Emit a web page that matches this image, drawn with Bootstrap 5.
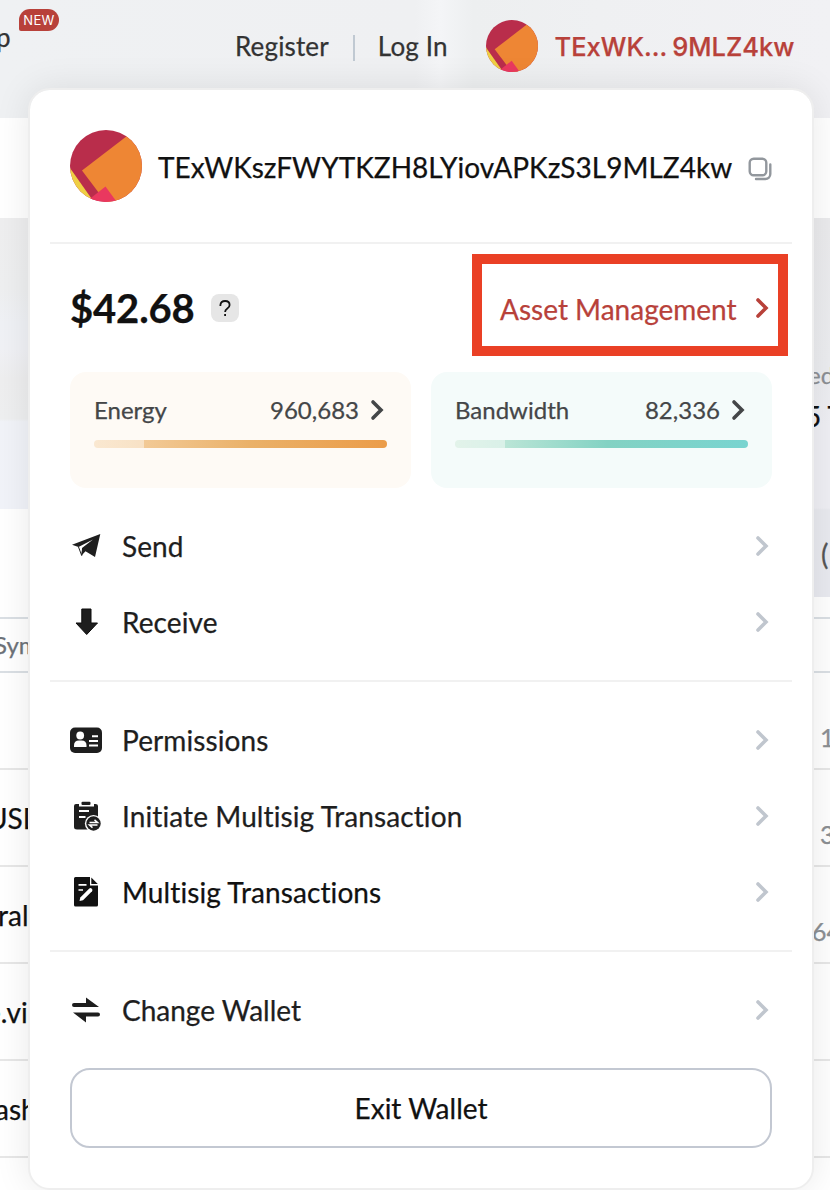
<!DOCTYPE html>
<html lang="en">
<head>
<meta charset="utf-8">
<meta name="viewport" content="width=device-width, initial-scale=1">
<title>Wallet</title>
<link href="https://cdn.jsdelivr.net/npm/bootstrap@5.3.0/dist/css/bootstrap.min.css" rel="stylesheet">
<style>
  body { font-family: Lato, "Liberation Sans", sans-serif; font-size: 28px; line-height: 36px; color: #1e1e1e; background: #fff; width: 830px; height: 1190px; overflow: hidden; font-variant-ligatures: none; -webkit-text-stroke: .25px currentColor; }
  svg { display: block; flex: none; }
  .topbar { height: 118px; background: linear-gradient(90deg, #eff1f3 0, #eff0f2 50%, #f4f5f7 53%, #edeff0 57%, #eff0f2 72%, #f1f1f4 100%); }
  .topbar-inner { height: 92px; padding-left: 235px; font-size: 26px; color: #333; letter-spacing: .15px; }
  .edge-link { left: -4px; top: 19px; font-size: 26px; color: #333; }
  .new-tag { left: 19px; top: 9px; width: 40px; height: 22px; line-height: 22px; font-family: Inter, sans-serif; font-size: 13px; color: #fff; background: #b8413a; border-radius: 11px 11px 11px 2px; letter-spacing: .3px; -webkit-text-stroke: 0; }
  .sep { width: 2px; height: 26px; background: #c0c9d2; margin: 3px 23px 0 24px; }
  .addr-short { font-family: Inter, sans-serif; font-weight: 500; font-size: 25.5px; color: #b8413a; margin: 2px 0 0 17px; white-space: nowrap; letter-spacing: 0; word-spacing: -1.5px; }
  .hero { margin-top: 100px; height: 399px; }
  .hero-left { width: 200px; height: 291px; background: linear-gradient(#eeeeef 0, #eeeff0 24%, #eff1f5 36%, #f0f1f5 45%, #eeeeef 55%, #eeeff0 69%, #f1f3f8 70%, #f1f3f9 100%); }
  .hero-right { width: 200px; height: 379px; background: linear-gradient(#ebebed 0, #ecedf0 40%, #efeff4 55%, #efeff4 76.5%, #e9eaef 77%, #e9eaf0 100%); }
  .hero-right div { white-space: nowrap; }
  .thead-row { height: 56px; border-top: 2px solid #dadfe4; border-bottom: 2px solid #dadfe4; font-size: 24px; color: #6d7278; }
  .coin-row { height: 97px; border-bottom: 2px solid #e7e7e7; color: #111; }
  .cell-l, .cell-r { white-space: nowrap; }
  .cell-l { width: 60px; }
  .cell-r { width: 18px; font-size: 25px; color: #8c9094; }
  .wallet { left: 28px; top: 88px; width: 786px; height: 1102px; background: #fff; background-clip: padding-box; border: 2px solid #eeeeee; border-radius: 22px; box-shadow: 0 0 36px rgba(0,0,0,.09); padding: 0 20px; }
  .owner { height: 154px; padding: 0 20px; border-bottom: 2px solid #f1f1f1; }
  .owner-addr { margin: 2px 0 0 16px; color: #111; white-space: nowrap; letter-spacing: .03px; }
  .balance { height: 128px; padding: 10px 4px 0 20px; }
  .total { font-size: 40px; font-weight: 700; color: #111; line-height: 50px; letter-spacing: -.15px; }
  .help { width: 28px; height: 28px; border-radius: 8px; background: #e6e6e6; margin-left: 16px; }
  .assets { width: 316px; height: 102px; border: 10px solid #ea4025; padding: 8px 0 0 18px; color: #b8413a; }
  .res { width: 341px; height: 116px; border-radius: 16px; padding: 20px 24px; font-size: 24px; color: #444648; }
  .res-energy { background: #fefaf5; }
  .res-band { background: #f4fbfa; }
  .meter { height: 8px; border-radius: 4px; margin-top: 12px; }
  .meter-e { background: linear-gradient(90deg, rgba(255,255,255,.45) 50px, transparent 50px), linear-gradient(90deg, #f6d5ab, #eab169 53%, #eb9c49); }
  .meter-b { background: linear-gradient(90deg, rgba(255,255,255,.45) 50px, transparent 50px), linear-gradient(90deg, #cbe9d8, #bae5d6 17%, #83d2c3 52%, #78d4d0); }
  .item { height: 76px; padding: 0 23px 2px 20px; }
  .item span { margin-left: 20px; letter-spacing: .1px; }
  .line { height: 2px; background: #f1f1f1; margin: 19px 0 21px; }
  .exit { height: 80px; border: 2px solid #c3c8d2; border-radius: 20px; margin: 19px 20px 0; color: #111; }
</style>
</head>
<body class="position-relative">
<svg width="0" height="0" class="position-absolute">
  <defs>
    <clipPath id="round"><circle cx="36" cy="36" r="36"/></clipPath>
    <symbol id="avatar" viewBox="0 0 72 72"><g clip-path="url(#round)"><path fill="#b92d4b" d="M0 0h72v72H0z"/><path fill="#efcf43" d="M0 38 26 75H0z"/><path fill="#ee8634" d="M57 6 12 40.500 38 75H75V0z"/><path fill="#e9385f" d="M35.500 56.500 49 75H12z"/></g></symbol>
    <symbol id="chev" viewBox="0 0 14 22"><path d="M3 3l8 8-8 8" fill="none" stroke="currentColor" stroke-width="3.600" stroke-linecap="round" stroke-linejoin="miter"/></symbol>
  </defs>
</svg>

<header class="topbar">
  <div class="edge-link position-absolute">p</div>
  <div class="new-tag position-absolute text-center">NEW</div>
  <div class="topbar-inner d-flex align-items-center">
    <span>Register</span><i class="sep"></i><span>Log In</span>
    <svg width="52" height="52" style="margin-left:38px"><use href="#avatar"/></svg>
    <span class="addr-short">TExWK... 9MLZ4kw</span>
  </div>
</header>

<main>
  <section class="hero d-flex justify-content-between">
    <div class="hero-left"></div>
    <div class="hero-right d-flex flex-column align-items-end">
      <div class="w-100" style="padding:139px 0 0 178px;font-size:24px;color:#8c9094">ed</div>
      <div class="w-100" style="padding:5px 0 0 175px;color:#111">5 <span style="margin-left:0">T</span></div>
      <div class="w-100" style="padding:102px 0 0 191px;color:#555">(</div>
    </div>
  </section>
  <div class="thead-row d-flex align-items-center justify-content-between"><div class="cell-l" style="margin-left:-6px">Sym</div></div>
  <div class="coin-row d-flex align-items-center justify-content-between"><div class="cell-l"></div><div class="cell-r ps-2" style="padding-top:32px">1</div></div>
  <div class="coin-row d-flex align-items-center justify-content-between"><div class="cell-l" style="margin-left:-13px">USD</div><div class="cell-r ps-2" style="padding-top:32px">3</div></div>
  <div class="coin-row d-flex align-items-center justify-content-between"><div class="cell-l" style="margin-left:-2px">ral</div><div class="cell-r" style="padding-top:32px">64</div></div>
  <div class="coin-row d-flex align-items-center justify-content-between"><div class="cell-l" style="margin-left:-14px">e.vi</div></div>
  <div class="coin-row d-flex align-items-center justify-content-between"><div class="cell-l" style="margin-left:-5px">ash</div></div>
</main>

<aside class="wallet position-absolute">
  <div class="owner d-flex align-items-center">
    <svg width="72" height="72"><use href="#avatar"/></svg>
    <span class="owner-addr">TExWKszFWYTKZH8LYiovAPKzS3L9MLZ4kw</span>
    <svg class="ms-auto" width="24" height="24" style="margin-top:6px" viewBox="0 0 24 24" fill="none" stroke="#92979d" stroke-width="2.400" stroke-linecap="round"><rect x="1.700" y="1.700" width="16.600" height="16.600" rx="4"/><path d="M22.300 7.500V17a5 5 0 0 1-5 5H8"/></svg>
  </div>
  <div class="balance d-flex align-items-start">
    <span class="total" style="margin-top:29px">$42.68</span>
    <svg class="help" style="margin-top:40px" viewBox="0 0 28 28" fill="none" stroke="#111" stroke-width="1.800"><path d="M9.400 12V11q.4-4 4.700-4 4.500 0 4.500 4c0 4-4.500 3-4.500 7M14.100 20v2"/></svg>
    <div class="assets d-flex align-items-center ms-auto"><span>Asset Management</span><svg width="14" height="22" style="margin:-2px 0 0 18px"><use href="#chev"/></svg></div>
  </div>
  <div class="d-flex justify-content-between" style="padding:0 20px">
    <div class="res res-energy">
      <div class="d-flex align-items-center"><span>Energy</span><span class="ms-auto">960,683</span><svg width="14" height="22" style="margin:0 3px 0 11px"><use href="#chev"/></svg></div>
      <div class="meter meter-e"></div>
    </div>
    <div class="res res-band">
      <div class="d-flex align-items-center"><span>Bandwidth</span><span class="ms-auto">82,336</span><svg width="14" height="22" style="margin:0 3px 0 11px"><use href="#chev"/></svg></div>
      <div class="meter meter-b"></div>
    </div>
  </div>
  <nav style="margin-top:21px">
    <div class="item d-flex align-items-center">
      <svg width="32" height="32" viewBox="0 0 32 32" fill="#1e1e1e"><path d="M30.300 4 2 14.700 8.500 17 23 9.500 12 18l-.5 7.500 4-4.200L25 27z"/><path d="M8.500 17l3.200 8.500 1.200-7" fill="none" stroke="#1e1e1e" stroke-width="1"/></svg>
      <span>Send</span><svg class="ms-auto" width="14" height="22" color="#c0c6ce"><use href="#chev"/></svg>
    </div>
    <div class="item d-flex align-items-center">
      <svg width="32" height="32" viewBox="0 0 32 32"><path d="M11.800 3H21v14h6.500L16.700 28.500 6 17h5.800z" fill="#1e1e1e" stroke="#0c0c0c"/></svg>
      <span>Receive</span><svg class="ms-auto" width="14" height="22" color="#c0c6ce"><use href="#chev"/></svg>
    </div>
    <div class="line"></div>
    <div class="item d-flex align-items-center">
      <svg width="32" height="32" viewBox="0 0 32 32"><rect y="3.500" width="32" height="25.500" rx="5" fill="#1e1e1e"/><g fill="#fff"><circle cx="10.200" cy="11.500" r="3.900"/><path d="M4 23v-1.500q0-5 5-5h2.500q5 0 5 5V23z"/><path d="M22 11.300h6v2h-6zM19 16h9v2h-9zM19 20.500h9v2h-9z"/></g></svg>
      <span>Permissions</span><svg class="ms-auto" width="14" height="22" color="#c0c6ce"><use href="#chev"/></svg>
    </div>
    <div class="item d-flex align-items-center">
      <svg width="32" height="32" viewBox="0 0 32 32"><path fill="#1e1e1e" d="M6 4h3v2.500h15V4h1.500Q28 4 28 6v23.500H7q-3 0-3-2.500V6q0-2 2-2z"/><rect x="11.500" y="1.800" width="9" height="3.200" rx="1" fill="#1e1e1e"/><path stroke="#fff" stroke-width="1.800" d="M9 11h10M9 17h6.500"/><circle cx="23.500" cy="23.500" r="8.600" fill="#fff"/><circle cx="23.500" cy="23.500" r="7.200" fill="#1e1e1e"/><path fill="none" stroke="#fff" stroke-width="1.500" d="M19.500 22.500h8l-3-2.600M27.500 25h-8l3 2.600"/></svg>
      <span>Initiate Multisig Transaction</span><svg class="ms-auto" width="14" height="22" color="#c0c6ce"><use href="#chev"/></svg>
    </div>
    <div class="item d-flex align-items-center" style="color:#111">
      <svg width="32" height="32" viewBox="0 0 32 32"><path fill="#111" d="M5.500 1H20v8.500h8V29q0 1.500-1.500 1.500h-21Q4 30.500 4 29V2.500Q4 1 5.500 1zM21.300 1.500 27.800 8h-6.500z"/><path stroke="#fff" stroke-width="1.700" d="M8.500 8.800h8M8.500 14h4.500"/><path fill="#fff" d="m9.500 25 .8-3.500 9-9q1.200-1 2.500.2t.2 2.500l-9 9z"/></svg>
      <span>Multisig Transactions</span><svg class="ms-auto" width="14" height="22" color="#c0c6ce"><use href="#chev"/></svg>
    </div>
    <div class="line"></div>
    <div class="item d-flex align-items-center">
      <svg width="32" height="32" viewBox="0 0 32 32" fill="#1e1e1e"><path d="M4 9h12V3.500L29 13H4a2 2 0 0 1 0-4zM28 18.500H3L16 28.500V22.500h12a2 2 0 0 0 0-4z"/></svg>
      <span style="letter-spacing:0">Change Wallet</span><svg class="ms-auto" width="14" height="22" color="#c0c6ce"><use href="#chev"/></svg>
    </div>
  </nav>
  <div class="exit d-flex align-items-center justify-content-center">Exit Wallet</div>
</aside>
<script src="https://cdn.jsdelivr.net/npm/bootstrap@5.3.0/dist/js/bootstrap.bundle.min.js"></script>
</body>
</html>
